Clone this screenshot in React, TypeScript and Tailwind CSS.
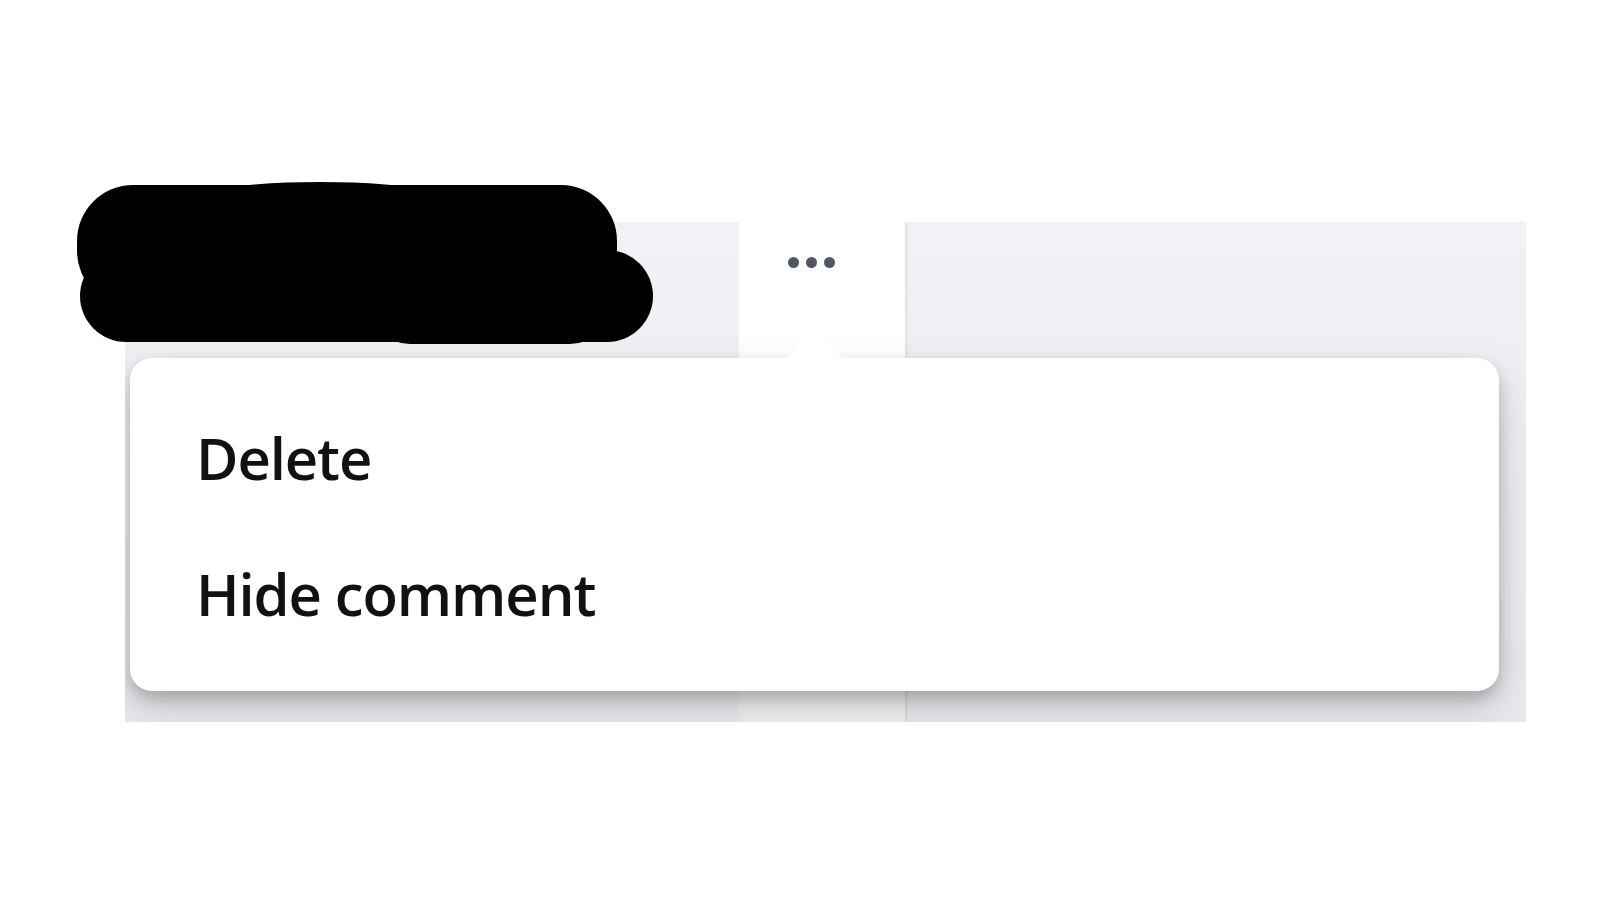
import React from "react";

const MENU_ITEMS = ["Delete", "Hide comment"];

function Redaction() {
  // black marker scribble covering the author name
  return (
    <svg
      className="absolute left-[70px] top-[176px]"
      width="592"
      height="172"
      viewBox="0 0 592 172"
    >
      <rect x="7" y="9" width="540" height="122" rx="56" fill="#000" />
      <ellipse cx="250" cy="38" rx="170" ry="32" fill="#000" />
      <rect x="10" y="74" width="573" height="92" rx="46" fill="#000" />
      <rect x="300" y="80" width="240" height="88" rx="40" fill="#000" />
    </svg>
  );
}

export default function App() {
  return (
    <div
      className="relative w-[1600px] h-[900px] bg-white overflow-hidden"
      style={{ fontFamily: '"Open Sans", "Noto Sans", sans-serif' }}
    >
      <div className="pt-[222px] pl-[125px]">
        <div className="relative flex w-[1401px] h-[500px] overflow-hidden">
          {/* left comment panel */}
          <div className="w-[614px] bg-gradient-to-b from-[#f1f2f6] to-[#e7e8ec]" />

          {/* more button column */}
          <div className="w-[166px] bg-gradient-to-b from-white via-white to-[#eeeef0]">
            <div className="flex gap-[7px] pt-[35px] pl-[49px]">
              <span className="w-[11px] h-[11px] rounded-full bg-[#505663] blur-[0.5px]" />
              <span className="w-[11px] h-[11px] rounded-full bg-[#505663] blur-[0.5px]" />
              <span className="w-[11px] h-[11px] rounded-full bg-[#505663] blur-[0.5px]" />
            </div>
          </div>

          {/* right panel */}
          <div className="flex-1 bg-gradient-to-b from-[#f1f2f6] to-[#e7e8ec] shadow-[inset_4px_0_3px_-2px_rgba(0,0,0,0.07)]" />

          {/* dropdown menu */}
          <div className="absolute left-[5px] top-[136px] w-[1369px]">
            <svg
              className="absolute left-[657px] -top-[30px]"
              width="56"
              height="31"
              viewBox="0 0 56 31"
            >
              <path d="M0 31 L24 3 Q28 -1 32 3 L56 31 Z" fill="#fff" />
            </svg>
            <div className="h-[333px] rounded-[22px] bg-white pt-[32px] pb-[29px] pl-[66px] shadow-[0_8px_16px_rgba(0,0,0,0.2),0_16px_40px_rgba(0,0,0,0.14)]">
              {MENU_ITEMS.map((item) => (
                <div
                  key={item}
                  className="flex items-center h-[136px] text-[58px] leading-none font-semibold tracking-[-1.1px] text-[#111]"
                >
                  {item}
                </div>
              ))}
            </div>
          </div>
        </div>
      </div>

      <Redaction />
    </div>
  );
}
